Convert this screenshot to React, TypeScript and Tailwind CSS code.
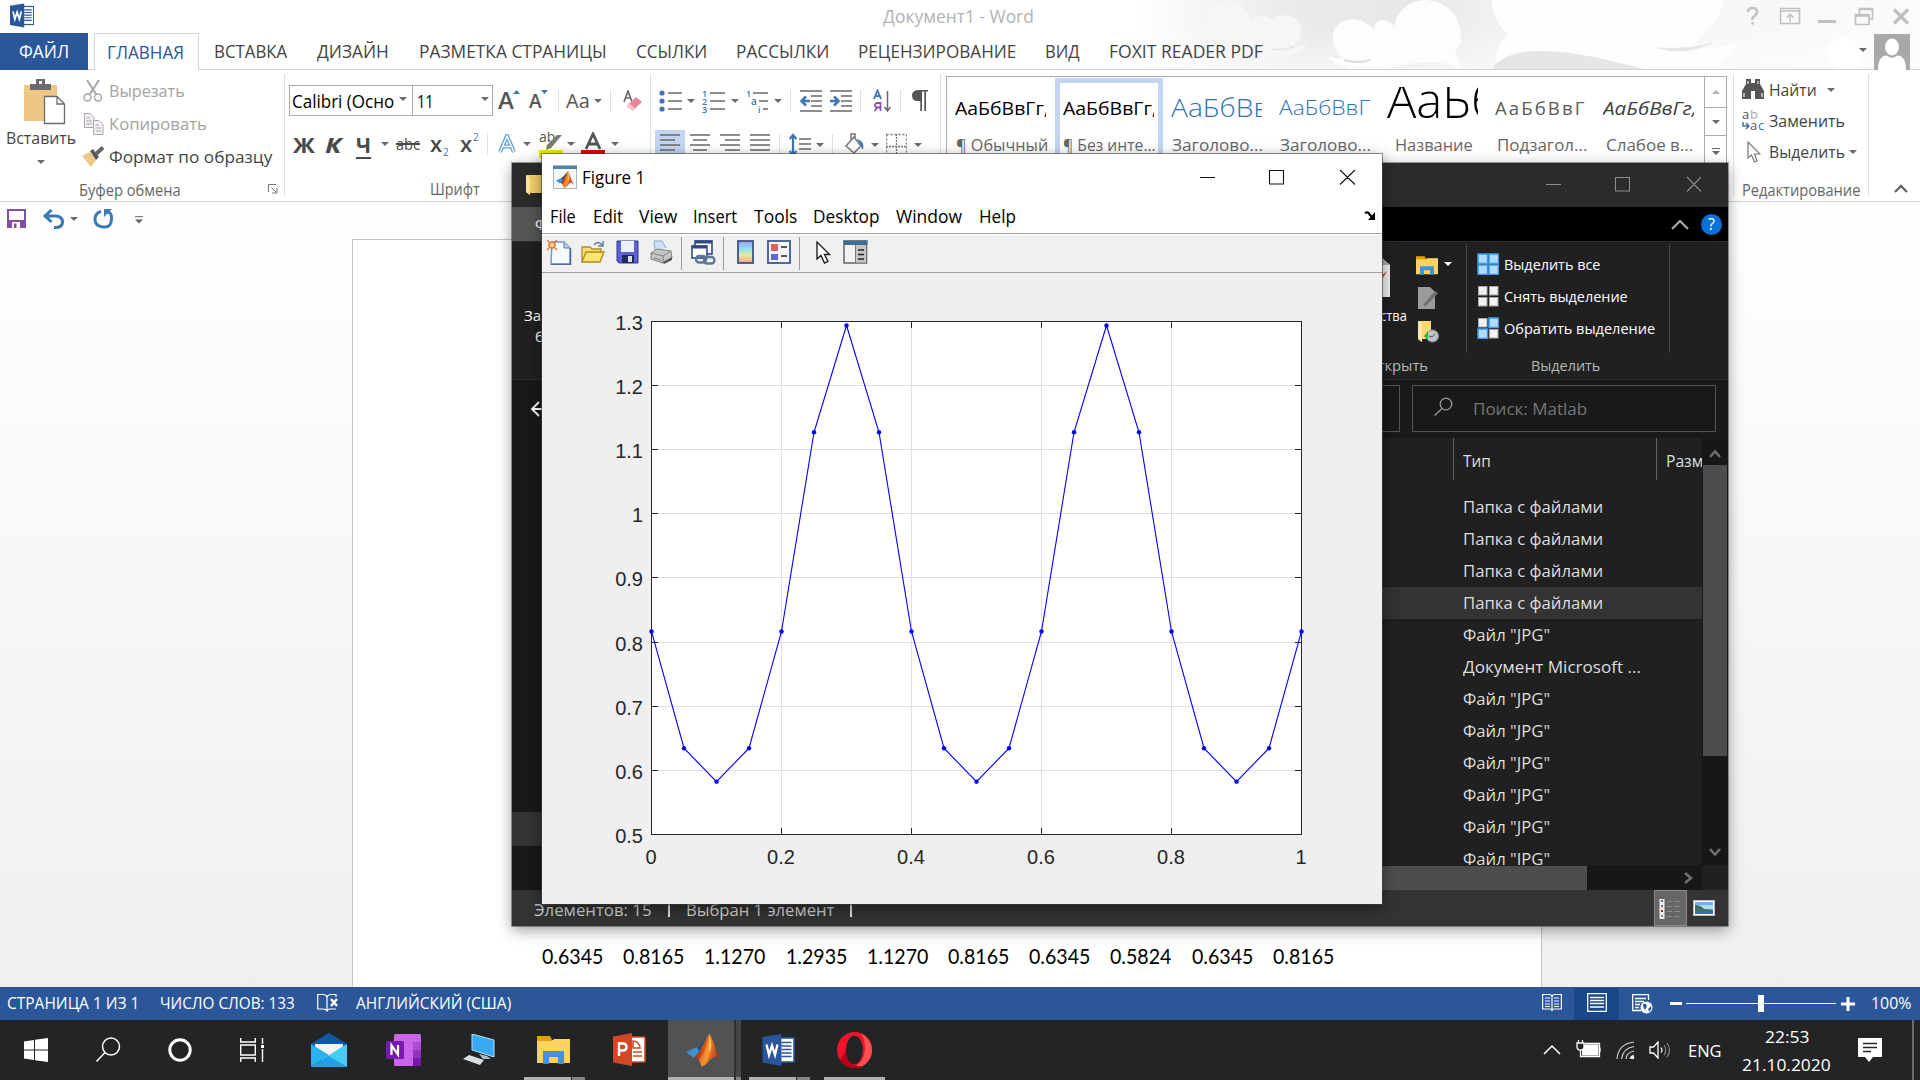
import React, { useLayoutEffect, useRef, useState } from "react";

type Kids = { children?: React.ReactNode };

/* Text squeezed or stretched horizontally to a given width. */
function T({ w, className = "", children }: Kids & { w: number; className?: string }) {
  const ref = useRef<HTMLSpanElement>(null);
  const [k, setK] = useState(1);
  useLayoutEffect(() => {
    if (ref.current && ref.current.offsetWidth) setK(w / ref.current.offsetWidth);
  }, [w, children]);
  return (
    <span className={"block shrink-0 whitespace-pre " + className} style={{ width: w }}>
      <span ref={ref} className="inline-block origin-left" style={{ transform: `scaleX(${k})` }}>
        {children}
      </span>
    </span>
  );
}

function Ico({ w, h, className = "", children }: Kids & { w: number; h: number; className?: string }) {
  return (
    <svg width={w} height={h} viewBox={`0 0 ${w} ${h}`} fill="none" className={"block shrink-0 " + className}>
      {children}
    </svg>
  );
}

const Tri = ({ className = "" }: { className?: string }) => (
  <Ico w={8} h={4} className={className}>
    <path d="M0 0H8L4 4Z" fill="#6a6a6a" />
  </Ico>
);

const Sep = ({ className = "" }: { className?: string }) => (
  <span className={"block h-[22px] w-px shrink-0 bg-[#e1e1e1] " + className} />
);

function Clouds() {
  return (
    <svg width="780" height="69" viewBox="1140 0 780 69" className="block">
      <defs>
        <linearGradient id="cl" x1="0" x2="1">
          <stop offset="0" stopColor="#ffffff" />
          <stop offset="0.1" stopColor="#f3f3f3" />
          <stop offset="0.22" stopColor="#e9e9e9" />
          <stop offset="0.36" stopColor="#e8e8e8" />
          <stop offset="0.46" stopColor="#f1f1f1" />
          <stop offset="0.72" stopColor="#f6f6f6" />
          <stop offset="1" stopColor="#fbfbfb" />
        </linearGradient>
        <linearGradient id="cf" x1="0" x2="0" y1="0" y2="1">
          <stop offset="0.3" stopColor="#ffffff" stopOpacity="0" />
          <stop offset="1" stopColor="#ffffff" stopOpacity="0.5" />
        </linearGradient>
      </defs>
      <rect x="1140" width="780" height="69" fill="url(#cl)" />
      <rect x="1140" width="780" height="69" fill="url(#cf)" />
      <path d="M1205 48C1196 35 1200 2 1228 0C1244 2 1250 16 1252 22C1256 14 1266 14 1269 20C1282 12 1298 14 1301 28C1302 40 1294 46 1290 47Q1300 48 1307 43C1302 55 1280 60 1262 56Z" fill="#f6f6f6" />
      <path d="M1272 49Q1282 51 1294 47" stroke="#e6e6e6" strokeWidth="1.500" fill="none" />
      <path d="M1333 34C1335 20 1352 16 1364 22Q1370 25 1374 30C1374 18 1388 17 1394 26C1398 10 1410 0 1426 0C1448 2 1462 16 1461 40Q1459 48 1455 52L1461 69H1457Q1448 62 1430 62Q1405 63 1385 69H1350Q1332 64 1328 56Q1338 60 1342 58Q1332 48 1333 34Z" fill="#fdfdfd" />
      <path d="M1344 60Q1358 64 1370 60" stroke="#dddddd" strokeWidth="2" fill="none" />
      <path d="M1492 0H1724C1722 18 1706 30 1694 45C1712 52 1730 44 1738 42C1735 54 1722 62 1716 69H1640C1610 60 1570 50 1535 51C1515 52 1505 58 1496 65C1494 50 1502 38 1508 34C1498 26 1492 14 1492 0Z" fill="#fefefe" />
      <path d="M1494 65C1505 57 1515 51 1535 51C1570 50 1610 60 1644 69H1494Z" fill="#e6e6e6" />
      <path d="M1658 48Q1685 56 1712 43Q1690 50 1658 48Z" fill="#e6e6e6" stroke="#e6e6e6" />
      <path d="M1827 56C1826 42 1840 34 1850 38C1858 42 1862 50 1858 69H1838Z" fill="#ffffff" />
    </svg>
  );
}

function WordLogo({ w, h }: { w: number; h: number }) {
  return (
    <svg width={w} height={h} viewBox="0 0 32 32" className="block shrink-0">
      <rect x="17" y="4" width="14.5" height="24" fill="#fff" stroke="#2b579a" strokeWidth="1.6" />
      <path d="M19 8.5H29M19 12H29M19 15.500H29M19 19H29M19 22.500H29" stroke="#2b579a" strokeWidth="1.6" />
      <path d="M0 3L19 0V32L0 28.500Z" fill="#2b579a" />
      <path d="M4 10.500L6.500 21L9.500 11.500L12.500 21L15 10.500" stroke="#fff" strokeWidth="2.300" fill="none" />
    </svg>
  );
}

function Matlab({ w, h }: { w: number; h: number }) {
  return (
    <svg width={w} height={h} viewBox="0 0 36 34" className="block shrink-0">
      <defs>
        <linearGradient id="mf" x1="0" x2="1" y1="0" y2="0.3">
          <stop offset="0" stopColor="#7c160e" />
          <stop offset="0.4" stopColor="#c9481a" />
          <stop offset="0.6" stopColor="#f18a2a" />
          <stop offset="1" stopColor="#b8321a" />
        </linearGradient>
      </defs>
      <path d="M0 19L11 14C16 12 18 5 23 2L18 18L8 25Z" fill="#3f8fd0" />
      <path d="M11 14C16 12 18 5 23 2L19 14L14 19Z" fill="#1c4f7c" />
      <path d="M9 24C14 20 17 10 24 0C28 6 30 18 36 28C31 22 29 23 26 26C22 30 20 33 16 34C14 28 12 24 9 24Z" fill="url(#mf)" />
      <path d="M24 1C25 10 27 16 23 24C21 28 19 32 16 34C15 31 14 29 13 27C19 22 22 10 24 1Z" fill="#f9a53a" opacity="0.5" />
      <path d="M24 0L26 14L24 20Z" fill="#ffd36a" />
    </svg>
  );
}

const tabs: [string, number, string][] = [
  ["ВСТАВКА", 73, "ml-[15px]"],
  ["ДИЗАЙН", 72, "ml-[30px]"],
  ["РАЗМЕТКА СТРАНИЦЫ", 188, "ml-[30px]"],
  ["ССЫЛКИ", 71, "ml-[29px]"],
  ["РАССЫЛКИ", 93, "ml-[29px]"],
  ["РЕЦЕНЗИРОВАНИЕ", 158, "ml-[29px]"],
  ["ВИД", 35, "ml-[29px]"],
  ["FOXIT READER PDF", 154, "ml-[29px]"],
];

function WordHeader() {
  return (
    <div className="relative h-[70px] shrink-0 border-b border-[#d4d4d4] bg-white">
      <div className="absolute top-0 right-0">
        <Clouds />
      </div>
      <div className="relative flex h-[33px] items-center">
        <div className="ml-[10px] -mt-[2px]"><WordLogo w={24} h={25} /></div>
        <T w={151} className="ml-[849px] text-[18px] text-[#b3b3b3]">Документ1 - Word</T>
        <Ico w={166} h={20} className="ml-[711px] -mt-[2px]">
          <path d="M3 6Q3 2 7.500 2T12 6Q12 8.500 9.500 10T7.500 14M7.500 16V18.500" stroke="#c3c3c3" strokeWidth="2.600" />
          <path d="M35.500 2.500H54.500V17.500H35.500ZM35.500 5H54.500M45 16V8M41.500 11.500L45 8L48.500 11.500" stroke="#c0c0c0" strokeWidth="1.500" />
          <path d="M73 15.500H91" stroke="#c0c0c0" strokeWidth="3" />
          <path d="M110.500 8.500H124V18.500H110.500ZM110.500 10H124M114.500 8V2.500H127.500V13H124M114.500 3.500H127.500" stroke="#c0c0c0" strokeWidth="1.700" />
          <path d="M149 3.500L163 17.500M163 3.500L149 17.500" stroke="#c0c0c0" strokeWidth="3.200" />
        </Ico>
      </div>
      <div className="relative flex h-[37px] items-center text-[18px] text-[#444]">
        <div className="flex h-[37px] w-[88px] items-center bg-[#2a579a] pl-[19px] text-white">
          <T w={50}>ФАЙЛ</T>
        </div>
        <div className="ml-[6px] flex h-[37px] w-[105px] items-center border border-b-0 border-[#d4d4d4] bg-white pl-[12px] text-[#2b579a]">
          <T w={77}>ГЛАВНАЯ</T>
        </div>
        {tabs.map(([t, w, m]) => (
          <T key={t} w={w} className={m}>{t}</T>
        ))}
        <Tri className="ml-[596px] -mt-[4px]" />
        <Ico w={36} h={36} className="ml-[7px]">
          <rect width="36" height="36" fill="#a9a9a9" />
          <ellipse cx="18" cy="13" rx="7" ry="8.500" fill="#fff" />
          <path d="M4 36C4 26 7 22 13 21.500Q18 26 23 21.500C29 22 32 26 32 36Z" fill="#fff" />
        </Ico>
      </div>
    </div>
  );
}

function ClipboardGroup() {
  return (
    <div className="flex h-[122px] w-[285px] flex-col border-r border-[#e1e1e1]">
      <div className="flex h-[98px]">
        <div className="w-[82px]">
          <Ico w={42} h={46} className="mt-[5px] ml-[24px]">
            <path d="M0 6H33V42H0Z" fill="#eec883" />
            <path d="M6 5H12V0H21V5H27V11H6Z" fill="#6b6b6b" />
            <rect x="15" y="2" width="3" height="3" fill="#fff" />
            <path d="M20.500 17.500H33L40.500 25V44.500H20.500ZM33 17.500V25H40.500" fill="#fff" stroke="#6b6b6b" strokeWidth="1.300" />
          </Ico>
          <T w={70} className="ml-[6px] text-[17px] leading-[26px] text-[#444]">Вставить</T>
          <Tri className="mt-[9px] ml-[37px]" />
        </div>
        <div className="text-[17px] text-[#444]">
          <div className="flex h-[33px] items-center text-[#a3a3a3]">
            <Ico w={20} h={22} className="ml-px">
              <path d="M4 0L13 14M16 0L7 14" stroke="#a8a8a8" strokeWidth="2" />
              <circle cx="4.500" cy="17.500" r="3.500" stroke="#a8a8a8" strokeWidth="1.500" />
              <circle cx="15" cy="17.500" r="3.500" stroke="#a8a8a8" strokeWidth="1.500" />
            </Ico>
            <T w={76} className="ml-[6px]">Вырезать</T>
          </div>
          <div className="flex h-[33px] items-center text-[#a3a3a3]">
            <Ico w={22} h={22}>
              <path d="M2.500 0.500H8L12 4.500V14.500H2.500ZM4.500 5H8M4.500 8H10M4.500 11H10" stroke="#aaa3ad" fill="#f3f0f5" />
              <path d="M11.500 7.500H17L21 11.500V21.500H11.500ZM13.500 12H17M13.500 15H19M13.500 18H19" stroke="#aaa3ad" fill="#f3f0f5" />
            </Ico>
            <T w={98} className="ml-[5px]">Копировать</T>
          </div>
          <div className="flex h-[33px] items-center">
            <Ico w={24} h={22}>
              <path d="M0 10L8 6L14 14L9 21Z" fill="#eec883" />
              <path d="M8 5L11 3L17 11L14 14Z" fill="#555" />
              <path d="M14 8L21 1.500" stroke="#666" strokeWidth="4" />
            </Ico>
            <T w={163} className="ml-[3px]">Формат по образцу</T>
          </div>
        </div>
      </div>
      <div className="mt-[5px] flex h-[24px] items-center text-[15.500px] leading-[24px] text-[#666]">
        <T w={102} className="mt-px ml-[79px]">Буфер обмена</T>
        <Ico w={10} h={10} className="ml-[87px]">
          <path d="M0.500 8V0.500H8M3.500 3.500L8 8M9 4V9H4" stroke="#777" />
        </Ico>
      </div>
    </div>
  );
}

function FontGroup() {
  return (
    <div className="flex h-[122px] w-[366px] flex-col border-r border-[#e1e1e1] pl-[4px]">
      <div className="mt-[11px] flex h-[31px] items-center text-[18px] text-[#555]">
        <div className="flex h-[31px] w-[124px] items-center border border-[#ababab] pl-[2px] text-black">
          <T w={102} className="mt-px text-[17.500px]">Calibri (Осно</T>
          <Tri className="ml-[5px] -mt-[4px]" />
        </div>
        <div className="-ml-px flex h-[31px] w-[81px] items-center border border-[#ababab] pl-[4px] text-black">
          <T w={17} className="mt-px text-[18px]">11</T>
          <Tri className="ml-[47px] -mt-[4px]" />
        </div>
        <T w={16} className="ml-[5px] text-[22.500px] font-semibold">А</T>
        <Ico w={7} h={4} className="-mt-[18px] -ml-px"><path d="M0 4H7L3.500 0Z" fill="#3d75b5" /></Ico>
        <T w={13} className="ml-[9px] mt-[2px] text-[19px] font-semibold">А</T>
        <Ico w={7} h={4} className="-mt-[18px] -ml-px"><path d="M0 0H7L3.500 4Z" fill="#3d75b5" /></Ico>
        <Sep className="ml-[10px]" />
        <T w={24} className="ml-[7px] text-[20px]">Аа</T>
        <Tri className="ml-[4px]" />
        <Sep className="ml-[8px]" />
        <Ico w={20} h={22} className="ml-[12px]">
          <path d="M1 12L5 1L9 12M2.500 8H8" stroke="#6a6a6a" strokeWidth="1.700" />
          <path d="M3.500 16L13 7L19 12L9.500 21Z" fill="#e8879b" />
          <path d="M3.500 16L6 13.500L12 18.500L9.500 21Z" fill="#f6c6cf" />
        </Ico>
      </div>
      <div className="mt-[13px] flex h-[30px] shrink-0 items-center text-[22px] leading-[30px] text-[#4a4a4a]">
        <T w={22} className="ml-[4px] font-bold">Ж</T>
        <T w={16} className="ml-[10px] font-bold italic">К</T>
        <T w={15} className="ml-[15px] font-bold [&>span]:underline [&>span]:decoration-[1.500px] [&>span]:underline-offset-[4px]">Ч</T>
        <Tri className="ml-[10px]" />
        <T w={24} className="ml-[7px] text-[17px] [&>span]:line-through [&>span]:decoration-[1.500px]">abc</T>
        <T w={12} className="ml-[10px] -mt-[2px] text-[22px] font-semibold">х</T>
        <span className="mt-[16px] w-[7px] pl-px text-[10px] text-[#3d75b5]">2</span>
        <T w={12} className="ml-[11px] -mt-[2px] text-[22px] font-semibold">х</T>
        <span className="-mt-[14px] w-[7px] pl-px text-[10px] text-[#3d75b5]">2</span>
        <Sep className="ml-[8px]" />
        <Ico w={18} h={20} className="ml-[10px]">
          <path d="M2 18L9 2L16 18M5 12.500H13" stroke="#5b9bd5" strokeWidth="4" />
          <path d="M2 18L9 2L16 18M5 12.500H13" stroke="#fff" strokeWidth="1.500" />
        </Ico>
        <Tri className="ml-[7px]" />
        <Ico w={24} h={26} className="mt-[2px] ml-[8px]">
          <text x="0" y="10" fontSize="14" fill="#555" fontFamily="Open Sans">ab</text>
          <path d="M23 3L12 16L7 18L8 13L18 3Z" fill="#7a7a7a" />
          <rect y="18" width="24" height="8" fill="#eaee00" />
        </Ico>
        <Tri className="ml-[4px]" />
        <Ico w={24} h={26} className="mt-[2px] ml-[6px]">
          <path d="M5 17L12 2L19 17M8 12H16" stroke="#555" strokeWidth="2.800" />
          <rect y="18" width="24" height="8" fill="#e00000" />
        </Ico>
        <Tri className="ml-[6px]" />
      </div>
      <T w={50} className="mt-[19px] ml-[141px] text-[15.500px] leading-[22px] text-[#666]">Шрифт</T>
    </div>
  );
}

const lines = "#6a6a6a";
const AlignIcon = ({ d, className = "" }: { d: string; className?: string }) => (
  <Ico w={20} h={22} className={className}><path d={d} stroke={lines} strokeWidth="1.500" /></Ico>
);

function ParagraphGroup() {
  return (
    <div className="flex h-[122px] w-[290px] flex-col border-r border-[#e1e1e1]">
      <div className="mt-[11px] flex h-[31px] items-center">
        <Ico w={23} h={22} className="ml-[8px]">
          <circle cx="3" cy="3" r="2.600" fill="#3d75b5" /><circle cx="3" cy="11" r="2.600" fill="#3d75b5" /><circle cx="3" cy="19" r="2.600" fill="#3d75b5" />
          <path d="M9 3H23M9 11H23M9 19H23" stroke={lines} strokeWidth="1.500" />
        </Ico>
        <Tri className="ml-[5px]" />
        <Ico w={23} h={24} className="ml-[7px]">
          <text x="0" y="8" fontSize="9" fontWeight="600" fill="#3d75b5" fontFamily="Open Sans">1</text>
          <text x="0" y="16" fontSize="9" fontWeight="600" fill="#3d75b5" fontFamily="Open Sans">2</text>
          <text x="0" y="24" fontSize="9" fontWeight="600" fill="#3d75b5" fontFamily="Open Sans">3</text>
          <path d="M8 4H23M8 12H23M8 20H23" stroke={lines} strokeWidth="1.500" />
        </Ico>
        <Tri className="ml-[6px]" />
        <Ico w={24} h={24} className="ml-[7px]">
          <text x="0" y="8" fontSize="9" fontWeight="600" fill="#3d75b5" fontFamily="Open Sans">1</text>
          <text x="5" y="16" fontSize="10" fontWeight="600" fill="#3d75b5" fontFamily="Open Sans">a</text>
          <text x="12" y="24" fontSize="9" fontWeight="600" fill="#3d75b5" fontFamily="Open Sans">i</text>
          <path d="M7 4H22M13 12H22M17 20H22" stroke={lines} strokeWidth="1.500" />
        </Ico>
        <Tri className="ml-[4px]" />
        <Sep className="ml-[8px]" />
        <Ico w={22} h={22} className="ml-[9px]">
          <path d="M0 1H22M11 6H22M11 11H22M11 16H22M0 21H22" stroke={lines} strokeWidth="1.500" />
          <path d="M10 11H3M6 6.500L1.500 11L6 15.500" stroke="#3d75b5" strokeWidth="2.600" />
        </Ico>
        <Ico w={22} h={22} className="ml-[8px]">
          <path d="M0 1H22M11 6H22M11 11H22M11 16H22M0 21H22" stroke={lines} strokeWidth="1.500" />
          <path d="M0 11H7M4 6.500L8.500 11L4 15.500" stroke="#3d75b5" strokeWidth="2.600" />
        </Ico>
        <Sep className="ml-[8px]" />
        <Ico w={19} h={24} className="ml-[12px]">
          <path d="M1 10L4.500 1.500L8 10M2.500 7H6.500" stroke="#3d75b5" strokeWidth="1.800" />
          <path d="M7.500 22V14H4.500Q2 14 2 16.300T4.500 18.500H7.500M4.500 18.500L1.500 22" stroke="#8e4fa8" strokeWidth="1.800" />
          <path d="M14.500 2V22M11.500 18L14.500 22L17.500 18" stroke={lines} strokeWidth="1.500" />
        </Ico>
        <Sep className="ml-[8px]" />
        <Ico w={17} h={21} className="ml-[10px]">
          <path d="M8 0H17V1.500H15V21H13.300V1.500H11V21H9.300V11H7Q1 11 1 5.500T8 0Z" fill="#555" />
        </Ico>
      </div>
      <div className="mt-[14px] flex h-[30px] items-center">
        <div className="ml-[4px] flex h-[30px] w-[30px] items-center justify-center bg-[#c3d5f1]">
          <AlignIcon d="M0 1H20M0 6H15M0 11H20M0 16H15M0 21H20" />
        </div>
        <AlignIcon className="ml-[5px]" d="M0 1H20M3 6H17M0 11H20M3 16H17M0 21H20" />
        <AlignIcon className="ml-[10px]" d="M0 1H20M5 6H20M0 11H20M5 16H20M0 21H20" />
        <AlignIcon className="ml-[10px]" d="M0 1H20M0 6H20M0 11H20M0 16H20M0 21H20" />
        <Sep className="ml-[9px]" />
        <Ico w={22} h={24} className="ml-[9px]">
          <path d="M4 2V22M0.500 6L4 2L7.500 6M0.500 18L4 22L7.500 18" stroke="#3d75b5" strokeWidth="2.200" />
          <path d="M10 6H22M10 11H22M10 16H22" stroke={lines} strokeWidth="1.500" />
        </Ico>
        <Tri className="ml-[5px]" />
        <Sep className="ml-[8px]" />
        <Ico w={25} h={26} className="ml-[9px]">
          <path d="M4 14L12 5L19 14L12 21ZM9 9V2H13V7" stroke="#777" strokeWidth="1.500" />
          <path d="M15 7Q23 9 21 18Q19 16 19 13Z" fill="#3d75b5" />
          <path d="M0.500 26V22.500H23.500V26" stroke="#888" />
        </Ico>
        <Tri className="ml-[4px]" />
        <Ico w={21} h={24} className="ml-[7px]">
          <path d="M0.500 1.500H20.500V23M0.500 1.500V23" stroke="#777" strokeWidth="1.300" strokeDasharray="2 2" />
          <path d="M10.500 1V23M0 13.500H21" stroke="#777" strokeWidth="1.300" strokeDasharray="2 1" />
        </Ico>
        <Tri className="ml-[7px]" />
      </div>
    </div>
  );
}

const styleCells: { s: string; n: string; nw: number; sw: number; c: string; sel?: boolean; big?: boolean }[] = [
  { s: "АаБбВвГг,", n: "¶ Обычный", nw: 92, sw: 94, c: "text-[18px] text-black" },
  { s: "АаБбВвГг,", n: "¶ Без инте...", nw: 93, sw: 94, c: "text-[18px] text-black", sel: true },
  { s: "АаБбВв", n: "Заголово...", nw: 91, sw: 98, c: "text-[25px] font-light text-[#2e74b5]" },
  { s: "АаБбВвГ", n: "Заголово...", nw: 91, sw: 91, c: "text-[21px] font-light text-[#2e74b5]" },
  { s: "АаБб", n: "Название", nw: 78, sw: 112, c: "text-[48px] font-light leading-[48px] text-black", big: true },
  { s: "АаБбВвГ", n: "Подзагол...", nw: 90, sw: 91, c: "text-[18px] tracking-[2px] text-[#5a5a5a]" },
  { s: "АаБбВвГг,", n: "Слабое в...", nw: 87, sw: 94, c: "text-[18px] italic text-[#404040]" },
];

function StylesGallery() {
  return (
    <div className="ml-[5px] flex h-[122px] w-[781px] items-start border-t border-r border-l border-[#ababab]">
      {styleCells.map((c, i) => (
        <div key={i} className={"box-border flex h-[122px] w-[108px] shrink-0 flex-col " + (c.sel ? "mt-px border-[5px] border-[#c3d5f1]" : "pt-[6px]")}>
          <div className={"flex w-[91px] overflow-hidden " + (c.sel ? "ml-[3px] " : "ml-[8px] ") + (c.big ? "mt-[4px] h-[40px] items-start" : "h-[44px] items-center pt-[6px]")}>
            <T w={c.sw} className={c.c + (c.big ? " -mt-[11px]" : "")}>{c.s}</T>
          </div>
          <div className={"mt-[6px] flex h-[24px] justify-center " + (c.sel ? "" : "pl-px")}>
            <T w={c.nw} className="text-[16px] leading-[24px] text-[#666]">{c.n}</T>
          </div>
        </div>
      ))}
      <div className="ml-px flex w-[22px] flex-col items-center border-l border-[#ababab]">
        <div className="flex h-[31px] w-full items-center justify-center border-b border-[#ababab]">
          <Ico w={8} h={4}><path d="M0 4H8L4 0Z" fill="#b5b5b5" /></Ico>
        </div>
        <div className="flex h-[28px] w-full items-center justify-center border-b border-[#ababab]"><Tri /></div>
        <div className="flex h-[30px] w-full items-center justify-center">
          <Ico w={8} h={7}><path d="M0 0.500H8" stroke="#666" /><path d="M0 3H8L4 7Z" fill="#666" /></Ico>
        </div>
      </div>
    </div>
  );
}

function EditingGroup() {
  return (
    <div className="ml-[6px] flex h-[122px] w-[136px] flex-col border-r border-l border-[#e1e1e1] pl-[8px] text-[17px] text-[#444]">
      <div className="flex h-[31px] shrink-0 items-center">
        <Ico w={22} h={20} className="-mt-px">
          <path d="M4 0H9V4H13V0H18V5L22 12V20H13V12H9V20H0V12L4 5Z" fill="#555" />
          <path d="M2 14V18M20 14V18M6 2V5M16 2V5" stroke="#eee" strokeWidth="1.200" />
        </Ico>
        <T w={48} className="ml-[5px]">Найти</T>
        <Tri className="ml-[10px]" />
      </div>
      <div className="flex h-[31px] shrink-0 items-center">
        <Ico w={23} h={22}>
          <text x="0" y="9" fontSize="13" fill="#555" fontFamily="Open Sans">a</text>
          <text x="8" y="9" fontSize="13" fill="#aaa" fontFamily="Open Sans">b</text>
          <text x="8" y="20" fontSize="13" fill="#555" fontFamily="Open Sans">a</text>
          <text x="16" y="20" fontSize="13" fill="#3d75b5" fontFamily="Open Sans">c</text>
          <path d="M1 12V16H6M4 13L7 16L4 19" stroke="#3d75b5" strokeWidth="1.500" />
        </Ico>
        <T w={76} className="ml-[4px]">Заменить</T>
      </div>
      <div className="flex h-[31px] shrink-0 items-center">
        <Ico w={14} h={22} className="ml-[5px]">
          <path d="M1 1V17L4.500 14L7.500 21L10 20L7.500 13H13Z" stroke="#777" strokeWidth="1.200" fill="#fff" />
        </Ico>
        <T w={76} className="ml-[8px]">Выделить</T>
        <Tri className="ml-[4px]" />
      </div>
      <T w={118} className="mt-[11px] text-[15.500px] leading-[24px] text-[#666]">Редактирование</T>
    </div>
  );
}

function Ribbon() {
  return (
    <div className="flex h-[132px] shrink-0 border-b border-[#d4d4d4] bg-white pt-[4px]">
      <ClipboardGroup />
      <FontGroup />
      <ParagraphGroup />
      <div className="mt-[2px] flex"><StylesGallery /></div>
      <EditingGroup />
      <Ico w={14} h={9} className="mt-[110px] ml-[25px]"><path d="M1 8L7 2L13 8" stroke="#666" strokeWidth="2.400" /></Ico>
    </div>
  );
}

function QuickAccess() {
  return (
    <div className="flex h-[34px] shrink-0 items-center">
      <Ico w={19} h={20} className="ml-[7px]">
        <rect x="1" y="1" width="17" height="17" fill="#fff" stroke="#8350a5" strokeWidth="2" />
        <rect y="11" width="19" height="8" fill="#8350a5" />
        <rect x="5" y="13" width="8" height="6" fill="#fff" />
        <rect x="7" y="14.500" width="2.500" height="4.500" fill="#8350a5" />
      </Ico>
      <Ico w={22} h={20} className="ml-[17px]">
        <path d="M2 7H13Q20 8 19.500 13.500T11 18.500M8.500 1L2 7L8.500 13" stroke="#3e78b5" strokeWidth="3" />
      </Ico>
      <Tri className="ml-[5px]" />
      <Ico w={21} h={20} className="ml-[15px]">
        <path d="M8 2.500Q2 4 2 10.500T10 18T18.500 10.500T13 3" stroke="#3e78b5" strokeWidth="3" />
        <path d="M11 0H19L11 8Z" fill="#3e78b5" />
      </Ico>
      <Ico w={8} h={8} className="mt-px ml-[21px]"><path d="M0 0.700H8" stroke="#666" /><path d="M0 3.500H8L4 7.500Z" fill="#666" /></Ico>
    </div>
  );
}

const values = ["0.6345", "0.8165", "1.1270", "1.2935", "1.1270", "0.8165", "0.6345", "0.5824", "0.6345", "0.8165"];

function DocumentArea() {
  return (
    <div className="flex grow flex-col bg-linear-to-b from-white to-[#efefef]">
      <QuickAccess />
      <div className="mt-[3px] ml-[352px] flex w-[1190px] grow flex-col justify-end border border-b-0 border-[#c6c6c6] bg-white">
        <div className="mb-[17px] ml-[189px] flex gap-[20.200px] text-[21.500px] leading-[28px] text-black">
          {values.map((v, i) => (
            <T key={i} w={61} className="font-[Lato]">{v}</T>
          ))}
        </div>
      </div>
    </div>
  );
}

function StatusBar() {
  return (
    <div className="flex h-[33px] shrink-0 items-center bg-[#2b579a] text-[15.500px] text-white">
      <T w={132} className="ml-[7px] mt-px">СТРАНИЦА 1 ИЗ 1</T>
      <T w={135} className="ml-[21px] mt-px">ЧИСЛО СЛОВ: 133</T>
      <Ico w={22} h={19} className="ml-[22px] -mt-[2px]">
        <path d="M10 4Q9 1.500 6 1.500H0.700V16H6Q9 16 10 18Q11 16 13 16H19M10 4V18M10 4Q11 1.500 14 1.500H19V4" stroke="#fff" strokeWidth="1.200" />
        <path d="M14 6L20 13M20 6L14 13" stroke="#fff" strokeWidth="2.400" />
      </Ico>
      <T w={155} className="ml-[17px] mt-px">АНГЛИЙСКИЙ (США)</T>
      <Ico w={20} h={19} className="ml-[1031px] -mt-[2px]">
        <path d="M0.600 1.500H8Q10 2 10 4Q10 2 12 1.500H19.400V16H12Q10 16 10 18Q10 16 8 16H0.600ZM10 3V17M3 5H8M3 8H8M3 11H8M3 13.500H8M12 5H17M12 8H17M12 11H17M12 13.500H17" stroke="#fff" strokeWidth="1.200" />
      </Ico>
      <div className="ml-[12px] flex h-[32px] w-[45px] items-center justify-center bg-[#19478a]">
        <Ico w={20} h={19} className="-mt-[3px]">
          <path d="M0.700 0.700H19.300V18.300H0.700ZM3 4.500H17M3 7.500H17M3 10.500H17M3 14H17" stroke="#fff" strokeWidth="1.300" />
        </Ico>
      </div>
      <Ico w={21} h={20} className="ml-[13px]">
        <path d="M9 16.500H0.700V0.700H16.500V6M3 4.500H14M3 7.500H12M3 10.500H8M3 13.500H7" stroke="#fff" strokeWidth="1.300" />
        <circle cx="14.500" cy="13.500" r="6" fill="#fff" />
        <path d="M11 10Q14 9 15 12L13 16Q11 14 11 10ZM16 15L19 12Q20 15 17.500 17.500Z" fill="#2b579a" />
      </Ico>
      <span className="ml-[17px] h-[3px] w-[12px] bg-white" />
      <div className="ml-[4px] flex h-[17px] w-[150px] items-center justify-center">
        <span className="h-px w-[72px] bg-white" />
        <span className="h-[17px] w-[6px] bg-white" />
        <span className="h-px w-[72px] bg-white" />
      </div>
      <Ico w={14} h={14} className="ml-[5px]"><path d="M7 0V14M0 7H14" stroke="#fff" strokeWidth="3" /></Ico>
      <T w={40} className="ml-[16px] mt-px">100%</T>
    </div>
  );
}

function FolderIcon({ w, h }: { w: number; h: number }) {
  return (
    <svg width={w} height={h} viewBox="0 0 33 28" className="block shrink-0">
      <path d="M0 0H13L15 4H33V11H0Z" fill="#e3a008" />
      <path d="M0 5H15L17 3H33V27H0Z" fill="#ffd35e" />
      <path d="M6 28V15H27V28H21V21H12V28Z" fill="#3a96dd" />
    </svg>
  );
}

function TaskSlot({ m, bar, children }: Kids & { m: string; bar?: React.ReactNode }) {
  return (
    <div className={"flex h-[60px] w-[61px] shrink-0 flex-col " + m}>
      <div className="flex h-[57px] items-center justify-center pt-[3px]">{children}</div>
      <div className="flex h-[3px]">{bar}</div>
    </div>
  );
}

function Taskbar() {
  return (
    <div className="flex h-[60px] shrink-0 items-center bg-[#222426] text-white">
      <Ico w={24} h={24} className="ml-[24px]">
        <path d="M0 3.500L10 2V11.500H0ZM11 1.800L24 0V11.500H11ZM0 12.500H10V22L0 20.500ZM11 12.500H24V24L11 22.200Z" fill="#fff" />
      </Ico>
      <Ico w={26} h={26} className="ml-[47px]"><circle cx="16" cy="9.500" r="8.500" stroke="#fff" strokeWidth="1.500" /><path d="M10 15.500L1.500 24.500" stroke="#fff" strokeWidth="1.500" /></Ico>
      <Ico w={24} h={24} className="ml-[47px]"><circle cx="12" cy="12" r="10.200" stroke="#fff" strokeWidth="3" /></Ico>
      <Ico w={24} h={24} className="ml-[48px]">
        <path d="M0.700 0V4H15.300V0M0.700 7H15.300V17H0.700ZM0.700 24V20H15.300V24M22.500 0V6M22.500 11V24" stroke="#fff" strokeWidth="1.400" />
        <rect x="21" y="7" width="3" height="3" fill="#fff" />
      </Ico>
      <Ico w={36} h={34} className="ml-[47px]">
        <path d="M0 11L18 0L36 11V20H0Z" fill="#0c5ba8" />
        <path d="M4 11H32V24L18 30L4 24Z" fill="#f4f4f4" />
        <path d="M0 11L18 22L0 34Z" fill="#28b4ee" />
        <path d="M36 11L0 34H36Z" fill="#1490df" />
        <path d="M36 11L17 23L36 34Z" fill="#47cdf5" />
        <path d="M17 23L0 34H36Z" fill="#1f9fe6" />
      </Ico>
      <Ico w={35} h={34} className="ml-[39px]">
        <rect x="8" y="1" width="27" height="32" rx="1.500" fill="#ca64ea" />
        <rect x="27" y="9" width="8" height="8" fill="#ae4bd5" /><rect x="27" y="17" width="8" height="8" fill="#9332bf" /><rect x="27" y="25" width="8" height="8" fill="#7719aa" />
        <rect y="8" width="18" height="18" rx="1.500" fill="#7719aa" />
        <path d="M5.500 22V12.500L12 21.500V12" stroke="#fff" strokeWidth="2.200" />
      </Ico>
      <Ico w={33} h={32} className="ml-[42px]">
        <path d="M9 0L31 6V23L9 16Z" fill="#38a9f5" stroke="#bcdcf0" />
        <path d="M0 25L6 21L21 26L17 31Z" fill="#d7dde2" /><path d="M16 20L24 22L28 25L20 25Z" fill="#aeb9c2" />
      </Ico>
      <TaskSlot m="ml-[28px]" bar={<><span className="w-[47px] bg-[#b0b0b0]" /><span className="ml-px w-[13px] bg-[#858585]" /></>}>
        <div className="-ml-[2px] -mt-px"><FolderIcon w={33} h={28} /></div>
      </TaskSlot>
      <Ico w={33} h={34} className="ml-[28px]">
        <rect x="17" y="4" width="15" height="25" rx="1" fill="#fff" stroke="#d24726" strokeWidth="1.600" />
        <path d="M20 8V15H27A7 7 0 0 0 20 8ZM20 19H29M20 23H29" stroke="#d24726" strokeWidth="1.600" />
        <path d="M0 3.500L19 0V33L0 29.500Z" fill="#d24726" />
        <path d="M6 23V10.500H10Q13.500 10.500 13.500 14T10 17.500H6" stroke="#fff" strokeWidth="2.400" />
      </Ico>
      <div className="ml-[22px] flex h-[60px]">
        <div className="flex w-[66px] flex-col bg-[#525252]">
          <div className="flex h-[57px] items-center justify-center pt-[2px] pl-[4px]"><Matlab w={35} h={34} /></div>
          <div className="h-[3px] bg-[#b0b0b0]" />
        </div>
        <span className="w-[2px] bg-[#303030]" />
        <div className="flex w-[5px] flex-col justify-end bg-[#464646]"><span className="h-[3px] bg-[#858585]" /></div>
      </div>
      <TaskSlot m="ml-[8px]" bar={<><span className="w-[47px] bg-[#b0b0b0]" /><span className="ml-px w-[13px] bg-[#858585]" /></>}>
        <div className="-ml-[2px]"><WordLogo w={33} h={32} /></div>
      </TaskSlot>
      <TaskSlot m="ml-[14px]" bar={<span className="w-[61px] bg-[#b0b0b0]" />}>
        <Ico w={35} h={36} className="-ml-px">
          <ellipse cx="17.500" cy="18" rx="17.500" ry="18" fill="#f0142b" />
          <path d="M17.500 36A17.500 18 0 0 0 35 18A17.500 18 0 0 0 24 1.500C30 10 30 27 20 33Z" fill="#ff5050" />
          <path d="M3 28A17.500 18 0 0 0 26 34C18 36 10 28 9 18Z" fill="#b3001b" />
          <ellipse cx="17.500" cy="18" rx="8.500" ry="14.300" fill="#222426" />
        </Ico>
      </TaskSlot>
      <Ico w={18} h={10} className="ml-[658px]"><path d="M1 9L9 1L17 9" stroke="#fff" strokeWidth="1.500" /></Ico>
      <Ico w={25} h={18} className="ml-[15px] -mt-[2px]">
        <rect x="5.500" y="4" width="17.500" height="12" fill="#fff" stroke="#222426" />
        <path d="M4.500 4V16.500H23.500V3.500H9M24 7.500V12" stroke="#fff" strokeWidth="1.300" />
        <path d="M1 3H8V7Q8 10 4.500 10T1 7Z" fill="#222426" stroke="#fff" strokeWidth="1.300" /><path d="M2.500 0V3M6.500 0V3" stroke="#fff" strokeWidth="1.200" />
      </Ico>
      <Ico w={19} h={19} className="ml-[15px]">
        <path d="M1 18Q2 3 18 1M5.500 18Q6.500 7.500 18 5.500M10 18Q10.500 11.500 18 10M14 18Q14.500 15 18 14" stroke="#d0d0d0" strokeWidth="1.200" />
        <circle cx="16.500" cy="16.500" r="1.800" fill="#fff" />
      </Ico>
      <Ico w={23} h={18} className="ml-[14px] -mt-px">
        <path d="M1 6H4.500L9 1V17L4.500 12H1Z" stroke="#fff" strokeWidth="1.300" />
        <path d="M12 6.500Q14 9 12 11.500" stroke="#fff" strokeWidth="1.200" /><path d="M15 4Q18.500 9 15 14M18 2Q23 9 18 16" stroke="#888" strokeWidth="1.200" />
      </Ico>
      <T w={34} className="ml-[16px] mt-px text-[17px]">ENG</T>
      <div className="ml-[20px] flex w-[89px] flex-col items-center pt-px text-[17px] leading-[28px]">
        <T w={44}>22:53</T>
        <T w={89}>21.10.2020</T>
      </div>
      <Ico w={24} h={25} className="ml-[27px]">
        <path d="M0 0H24V19H15L11 24L7 19H0Z" fill="#fff" /><path d="M5 5.500H19M5 9.500H19M5 13.500H13" stroke="#222426" strokeWidth="1.500" />
      </Ico>
      <span className="ml-[30px] h-[60px] w-[2px] bg-[#6b6b6b]" />
    </div>
  );
}

const SelectIcon = ({ c }: { c: boolean[] }) => (
  <Ico w={22} h={22}>
    {c.map((on, i) => (
      <rect
        key={i}
        x={(i % 2) * 11 + (on ? 1 : 1.5)}
        y={Math.floor(i / 2) * 11 + (on ? 1 : 1.5)}
        width={on ? 9.5 : 8.5}
        height={on ? 9.5 : 8.5}
        fill={on ? "#b0dcff" : "#f2f2f2"}
        stroke={on ? "#3a9bee" : "#a5a5a5"}
        strokeWidth={on ? 1.5 : 1}
      />
    ))}
  </Ico>
);

const fileTypes = [
  "Папка с файлами", "Папка с файлами", "Папка с файлами", "Папка с файлами", 'Файл "JPG"', "Документ Microsoft ...",
  'Файл "JPG"', 'Файл "JPG"', 'Файл "JPG"', 'Файл "JPG"', 'Файл "JPG"', 'Файл "JPG"',
];
const typeWidth = (t: string) => (t[0] === "П" ? 140 : t[0] === "Ф" ? 87 : 178);

function ExplorerWindow() {
  return (
    <div className="absolute top-[163px] left-[512px] flex h-[763px] w-[1216px] flex-col bg-[#202020] text-[15px] text-white shadow-[0_4px_14px_rgba(0,0,0,0.4),0_0_0_1px_rgba(110,110,110,0.6)]">
      <div className="flex h-[44px] items-center justify-between bg-[#2b2b2b]">
        <Ico w={20} h={22} className="ml-[13px]"><path d="M1 1H19V19H5V21L1 18Z" fill="#f3cf6b" /><path d="M1 1L5 4V21L1 18Z" fill="#ffe69a" /></Ico>
        <Ico w={156} h={16} className="mr-[26px] -mt-[2px]">
          <path d="M0 8.500H15M69.500 1.500H83.500V15H69.500ZM141 1L155 15.500M155 1L141 15.500" stroke="#8c8c8c" strokeWidth="1.100" />
        </Ico>
      </div>
      <div className="flex h-[34px] items-center justify-between bg-black">
        <div className="flex h-full w-[90px] items-center bg-[#555] pl-[23px]">Файл</div>
        <div className="flex items-center">
          <Ico w={18} h={11} className="mr-[12px]"><path d="M1 10L9 2L17 10" stroke="#a8a8a8" strokeWidth="2.200" /></Ico>
          <span className="mr-[6px] flex h-[21px] w-[21px] items-center justify-center rounded-full bg-[#0a6fd6] text-[16px] leading-none">?</span>
        </div>
      </div>
      <div className="flex h-[139px] justify-between border-t border-b border-[#2c2c2c] bg-[#202020]">
        <div className="w-[60px] pt-[63px] leading-[21px]">
          <div className="pl-[12px]">Закр</div>
          <div className="pl-[23px]">быс</div>
        </div>
        <div className="flex w-[346px] pt-[3px]">
          <div className="flex w-[85px] flex-col">
            <div className="flex h-[108px] border-r border-[#484848] pt-[11px]">
              <div className="w-[34px] shrink-0">
                <Ico w={8} h={42}><path d="M0 2L8 9V41H0Z" fill="#f0f0f0" /><path d="M0 2L8 9H0Z" fill="#aaa" /><path d="M0 19L5 15L1 22Z" fill="#d9531e" /></Ico>
                <T w={35} className="-ml-[10px] mt-[6px]">йства</T>
              </div>
              <div className="flex flex-col gap-[12px]">
                <div className="flex h-[19px] items-center"><FolderIcon w={22} h={19} />
                  <Ico w={8} h={4} className="ml-[6px] -mt-[3px]"><path d="M0 0H8L4 4Z" fill="#fff" /></Ico>
                </div>
                <Ico w={22} h={22} className="ml-[2px]"><path d="M0 0H12L17 5V22H0Z" fill="#9b9b9b" /><path d="M5 18L17 4L20 6L8 19Z" fill="#6e6e6e" /></Ico>
                <Ico w={22} h={22} className="ml-[2px]"><path d="M0 0H13V18H4V21L0 18Z" fill="#ffd970" /><path d="M0 0L4 3V21L0 18Z" fill="#ffe9a8" /><circle cx="14.500" cy="15" r="6" fill="#bfc4c8" stroke="#8a8f94" /><path d="M6 15L10 10V20Z" fill="#2cb742" /><path d="M11 15L14 16L17 13" stroke="#555" /></Ico>
              </div>
            </div>
            <T w={62} className="-ml-[16px] mt-px text-[#b8b8b8]">Открыть</T>
          </div>
          <div className="flex w-[203px] flex-col">
            <div className="flex h-[108px] flex-col border-r border-[#484848] pt-[3px] pl-[10px]">
              <div className="flex h-[32px] items-center gap-[5px]"><SelectIcon c={[true, true, true, true]} /><T w={96}>Выделить все</T></div>
              <div className="flex h-[32px] items-center gap-[5px]"><SelectIcon c={[false, false, false, false]} /><T w={124}>Снять выделение</T></div>
              <div className="flex h-[32px] items-center gap-[5px]"><SelectIcon c={[false, true, true, false]} /><T w={151}>Обратить выделение</T></div>
            </div>
            <T w={69} className="mt-px ml-[64px] text-[#b8b8b8]">Выделить</T>
          </div>
        </div>
      </div>
      <div className="flex h-[58px] items-center justify-between bg-[#191919]">
        <Ico w={20} h={18} className="ml-[18px]"><path d="M2 9H18M9 2L2 9L9 16" stroke="#fff" strokeWidth="1.800" /></Ico>
        <div className="-mt-px flex">
          <div className="flex h-[47px] w-[40px] items-center border border-l-0 border-[#535353] bg-[#191919]">
            <Ico w={24} h={16}><path d="M-2 2Q5 8 -2 14" stroke="#777" strokeWidth="2" /></Ico>
          </div>
          <div className="mr-[12px] ml-[12px] flex h-[47px] w-[304px] items-center border border-[#535353] pl-[20px] text-[17px] text-[#777]">
            <Ico w={20} h={20} className="-mt-[3px]"><circle cx="13" cy="7" r="5.800" stroke="#9a9a9a" strokeWidth="1.300" /><path d="M9 11.500L1.500 18.500" stroke="#9a9a9a" strokeWidth="1.300" /></Ico>
            <T w={114} className="ml-[20px] mt-px">Поиск: Matlab</T>
          </div>
        </div>
      </div>
      <div className="flex h-[452px] justify-between">
        <div className="flex w-[60px] flex-col bg-[#191919] pt-[374px]"><span className="h-[34px] bg-[#333]" /></div>
        <div className="flex w-[346px] flex-col bg-[#202020]">
          <div className="flex h-[427px]">
            <div className="w-[320px] overflow-hidden text-[16.500px] text-[#dedede]">
              <div className="flex h-[42px] items-center">
                <div className="h-full w-[72px] shrink-0 border-r border-[#636363]" />
                <div className="flex h-full w-[203px] shrink-0 items-center border-r border-[#636363] pt-[4px] pl-[9px]"><T w={28}>Тип</T></div>
                <T w={56} className="mt-[4px] ml-[9px]">Размер</T>
              </div>
              <div className="pt-[11px]">
                {fileTypes.map((t, i) => (
                  <div key={i} className={"flex h-[32px] items-center pl-[81px] " + (i === 3 ? "bg-[#333]" : "")}>
                    <T w={typeWidth(t)}>{t}</T>
                  </div>
                ))}
              </div>
            </div>
            <div className="flex w-[26px] flex-col items-center bg-[#171717]">
              <Ico w={12} h={9} className="mt-[11px]"><path d="M1 8L6 2.500L11 8" stroke="#6e6e6e" strokeWidth="2.600" /></Ico>
              <span className="mt-[7px] h-[291px] w-[24px] bg-[#4d4d4d]" />
              <Ico w={12} h={9} className="mt-[92px]"><path d="M1 1L6 6.500L11 1" stroke="#6e6e6e" strokeWidth="2.600" /></Ico>
            </div>
          </div>
          <div className="flex h-[25px] items-center">
            <span className="h-[24px] w-[205px] bg-[#4d4d4d]" />
            <div className="flex h-[25px] w-[115px] items-center justify-end bg-[#171717] pr-[8px]">
              <Ico w={10} h={12}><path d="M1 1L7 6L1 11" stroke="#6e6e6e" strokeWidth="2.600" /></Ico>
            </div>
          </div>
        </div>
      </div>
      <div className="flex h-[36px] items-center bg-[#333] text-[16.500px] text-[#d0d0d0]">
        <T w={118} className="ml-[22px] mt-[4px]">Элементов: 15</T>
        <span className="ml-[16px] mt-[3px] h-[14px] w-[2px] bg-[#e0e0e0]" />
        <T w={148} className="ml-[16px] mt-[4px]">Выбран 1 элемент</T>
        <span className="ml-[16px] mt-[3px] h-[14px] w-[2px] bg-[#e0e0e0]" />
        <div className="ml-[802px] flex h-[36px] w-[33px] items-center justify-center border border-[#8a8a8a] bg-[#666]">
          <Ico w={22} h={22} className="mt-[2px] -ml-[2px]">
            <path d="M3 1V21" stroke="#eee" strokeWidth="5" />
            <path d="M8 3.500H13M15 3.500H21M8 8.500H13M15 8.500H21M8 13.500H13M15 13.500H21M8 18.500H13M15 18.500H21" stroke="#8b8b8b" />
            <rect x="2" y="2" width="2" height="2" fill="#3b78c4" /><rect x="2" y="7" width="2" height="2" fill="#6b7a4a" /><rect x="2" y="12" width="2" height="2" fill="#b3261e" /><rect x="2" y="17" width="2" height="2" fill="#78909c" />
          </Ico>
        </div>
        <Ico w={22} h={16} className="ml-[6px]">
          <rect x="0.500" y="0.500" width="21" height="15" fill="#fff" stroke="#bbb" /><rect x="2" y="2" width="18" height="12" fill="#6fb1f2" /><rect x="2" y="5" width="18" height="4" fill="#b9dcf7" />
          <path d="M2 5Q8 5 11 9L20 10V12H2Z" fill="#3f6f5c" /><path d="M2 11H20V14H2Z" fill="#3a6ea8" />
        </Ico>
      </div>
    </div>
  );
}

const menu: [string, number, string][] = [
  ["File", 26, "ml-[8px]"], ["Edit", 30, "ml-[17px]"], ["View", 38, "ml-[16px]"], ["Insert", 44, "ml-[16px]"],
  ["Tools", 43, "ml-[17px]"], ["Desktop", 67, "ml-[16px]"], ["Window", 66, "ml-[16px]"], ["Help", 37, "ml-[17px]"],
];

const cycle = [0.8165, 0.6345, 0.5824, 0.6345, 0.8165, 1.127, 1.2935, 1.127];
const px = (x: number) => 109.5 + x * 650;
const py = (y: number) => 48.3 + (1.3 - y) * 641.5;

function Plot() {
  const pts = Array.from({ length: 21 }, (_, i) => [px(i / 20), py(cycle[i % 8])]);
  const xs = [0, 0.2, 0.4, 0.6, 0.8, 1];
  const ys = [0.5, 0.6, 0.7, 0.8, 0.9, 1, 1.1, 1.2, 1.3];
  const r = (n: number) => Math.floor(n) + 0.5;
  return (
    <svg width="840" height="631" viewBox="0 0 840 631" className="block" fontFamily="Liberation Sans, sans-serif" fontSize="20" fill="#262626">
      <rect x="109.500" y="48.500" width="650" height="513" fill="#fff" />
      {xs.slice(1, -1).map((x) => (
        <path key={x} d={`M${r(px(x))} 49V561`} stroke="#dfdfdf" />
      ))}
      {ys.slice(1, -1).map((y) => (
        <path key={y} d={`M110 ${r(py(y))}H759`} stroke="#dfdfdf" />
      ))}
      {xs.slice(1, -1).map((x) => (
        <path key={x} d={`M${r(px(x))} 49V55M${r(px(x))} 561V555`} stroke="#262626" />
      ))}
      {ys.slice(1, -1).map((y) => (
        <path key={y} d={`M110 ${r(py(y))}H116M759 ${r(py(y))}H753`} stroke="#262626" />
      ))}
      <rect x="109.500" y="48.500" width="650" height="513" fill="none" stroke="#262626" />
      <polyline points={pts.map((p) => p.join(",")).join(" ")} fill="none" stroke="#0000ff" strokeWidth="1.100" />
      {pts.map((p, i) => (
        <circle key={i} cx={p[0]} cy={p[1]} r="2.200" fill="#0000ff" />
      ))}
      {xs.map((x) => (
        <text key={x} x={px(x) - 0.5} y="591" textAnchor="middle">{x}</text>
      ))}
      {ys.map((y) => (
        <text key={y} x="101" y={py(y) + 8.5} textAnchor="end">{y}</text>
      ))}
    </svg>
  );
}

function FigureWindow() {
  return (
    <div className="absolute top-[154px] left-[542px] flex h-[750px] w-[840px] flex-col bg-[#efefef] text-[17.500px] text-black shadow-[0_4px_14px_rgba(0,0,0,0.45),0_0_0_1px_rgba(80,80,80,0.6)]">
      <div className="flex h-[45px] items-center bg-white">
        <div className="ml-[11px] flex h-[24px] w-[24px] flex-col items-center border border-[#b4b4b4] bg-[#f4f6f8]">
          <span className="h-[3px] w-[24px] shrink-0 bg-[#4486a8]" />
          <div className="mt-[2px]"><Matlab w={18} h={17} /></div>
        </div>
        <T w={63} className="ml-[5px] mt-px">Figure 1</T>
        <Ico w={156} h={16} className="ml-[555px]">
          <path d="M0 8.500H15M69.500 1.500H83.500V15H69.500ZM140 1L155 15.500M155 1L140 15.500" stroke="#111" strokeWidth="1.100" />
        </Ico>
      </div>
      <div className="flex h-[35px] items-center border-b border-[#a0a0a0] bg-white">
        {menu.map(([t, w, m]) => (
          <T key={t} w={w} className={m}>{t}</T>
        ))}
        <Ico w={12} h={10} className="ml-[348px]"><path d="M1 2Q4 0 6 4L10 8" stroke="#000" strokeWidth="2.200" /><path d="M11 1V9H4Z" fill="#000" /></Ico>
      </div>
      <div className="flex h-[39px] items-center border-t border-b border-t-white border-b-[#a0a0a0] bg-[#f0f0f0]">
        <Ico w={25} h={25} className="ml-[5px] -mt-[3px]">
          <path d="M5 2H17L23 8V24H4Z" fill="#f4faff" stroke="#7a97bf" strokeWidth="1.500" /><path d="M23.500 8V24.500H4" stroke="#4d6d9c" strokeWidth="1.500" /><path d="M17 2V8H23" fill="#b7cfea" stroke="#5b7fb0" />
          <circle cx="5" cy="5" r="3" fill="#ffd77a" stroke="#e0703a" strokeWidth="1.500" /><path d="M0 0L2 2M10 0L8 2M0 10L2 8M10 10L8 8" stroke="#e0703a" strokeWidth="1.500" />
        </Ico>
        <Ico w={24} h={24} className="ml-[9px] -mt-[3px]">
          <path d="M1 22V7H9L11 9H20V13" fill="#f5df7a" stroke="#b08a1e" strokeWidth="1.300" /><path d="M1 22L5 12H23L19 22Z" fill="#fbe66f" stroke="#b08a1e" strokeWidth="1.300" />
          <path d="M13 5Q17 0 21 5M22 1V6H17" stroke="#5f7f9c" strokeWidth="1.500" />
        </Ico>
        <Ico w={24} h={24} className="ml-[11px] -mt-[3px]">
          <path d="M1 1H22V23H3L1 21Z" fill="#5d62cf" stroke="#30348f" /><rect x="5" y="1" width="13" height="11" fill="#eaf2ff" /><rect x="6" y="15" width="12" height="8" fill="#222a55" /><rect x="12" y="16" width="4" height="6" fill="#dde" />
        </Ico>
        <Ico w={24} h={24} className="ml-[10px] -mt-[3px]">
          <path d="M5 10L4 1H12L16 8" fill="#cfe2fb" stroke="#8aa6cc" /><path d="M1 13L7 9L21 11L22 18L13 23L1 19Z" fill="#c6c8c6" stroke="#7d7f7d" /><path d="M1 13L13 16L21 11M13 16V23M4 18L11 20" stroke="#7d7f7d" /><path d="M13 22L22 17V20L14 24Z" fill="#555" />
        </Ico>
        <span className="ml-[7px] h-[33px] w-px bg-[#9a9a9a]" />
        <Ico w={25} h={25} className="ml-[9px] -mt-[3px]">
          <rect x="4" y="1" width="17" height="13" fill="#fff" stroke="#2d4a86" strokeWidth="1.600" /><path d="M4 2H21" stroke="#2d4a86" strokeWidth="3" />
          <rect x="1" y="6" width="15" height="12" fill="#fff" stroke="#2d4a86" strokeWidth="1.600" /><path d="M1 7H16" stroke="#2d4a86" strokeWidth="3" />
          <rect x="5" y="16" width="10" height="6.500" rx="3.200" stroke="#5c7899" strokeWidth="2.300" /><rect x="13" y="17" width="10.500" height="6.500" rx="3.200" stroke="#5c7899" strokeWidth="2.300" />
        </Ico>
        <span className="ml-[7px] h-[33px] w-px bg-[#9a9a9a]" />
        <Ico w={18} h={24} className="ml-[13px] -mt-[3px]">
          <defs><linearGradient id="cb" x1="0" x2="0" y1="0" y2="1"><stop offset="0" stopColor="#a999f0" /><stop offset="0.35" stopColor="#8fe0f0" /><stop offset="0.65" stopColor="#e6eb98" /><stop offset="1" stopColor="#f2a08c" /></linearGradient></defs>
          <rect x="1" y="1" width="15" height="22" fill="url(#cb)" stroke="#3d5584" strokeWidth="1.800" />
        </Ico>
        <Ico w={24} h={24} className="ml-[12px] -mt-[3px]">
          <rect x="1" y="1" width="22" height="22" fill="#f5f7fd" stroke="#3d5a98" strokeWidth="1.800" /><rect x="4" y="4" width="7" height="7" fill="#e0615e" /><rect x="4" y="14" width="7" height="6" fill="#5f66e0" /><path d="M14 7H20M14 16H20" stroke="#222" strokeWidth="1.500" />
        </Ico>
        <span className="ml-[8px] h-[33px] w-px bg-[#9a9a9a]" />
        <Ico w={16} h={24} className="ml-[15px] -mt-px">
          <path d="M2 1V18L6 14.500L9.500 22L13 20.500L9.500 13.500H14.500Z" fill="#fff" stroke="#222" strokeWidth="1.400" />
        </Ico>
        <Ico w={25} h={24} className="ml-[12px] -mt-[3px]">
          <rect x="1" y="1" width="22.500" height="22" fill="#f2f2f2" stroke="#6f6f6f" strokeWidth="1.600" /><rect x="0.500" y="0.500" width="24" height="4.500" fill="#3f6f92" /><rect x="13" y="5" width="10" height="17.500" fill="#c4c4c4" /><path d="M12.500 5V23" stroke="#777" /><path d="M15 10H21M15 14.500H21M15 19H21" stroke="#222" strokeWidth="1.600" />
        </Ico>
      </div>
      <Plot />
    </div>
  );
}

export default function App() {
  return (
    <div className="relative flex h-[1080px] w-[1920px] flex-col overflow-hidden bg-white font-['Open_Sans','Noto_Sans',sans-serif]">
      <WordHeader />
      <Ribbon />
      <DocumentArea />
      <StatusBar />
      <Taskbar />
      <ExplorerWindow />
      <FigureWindow />
    </div>
  );
}
